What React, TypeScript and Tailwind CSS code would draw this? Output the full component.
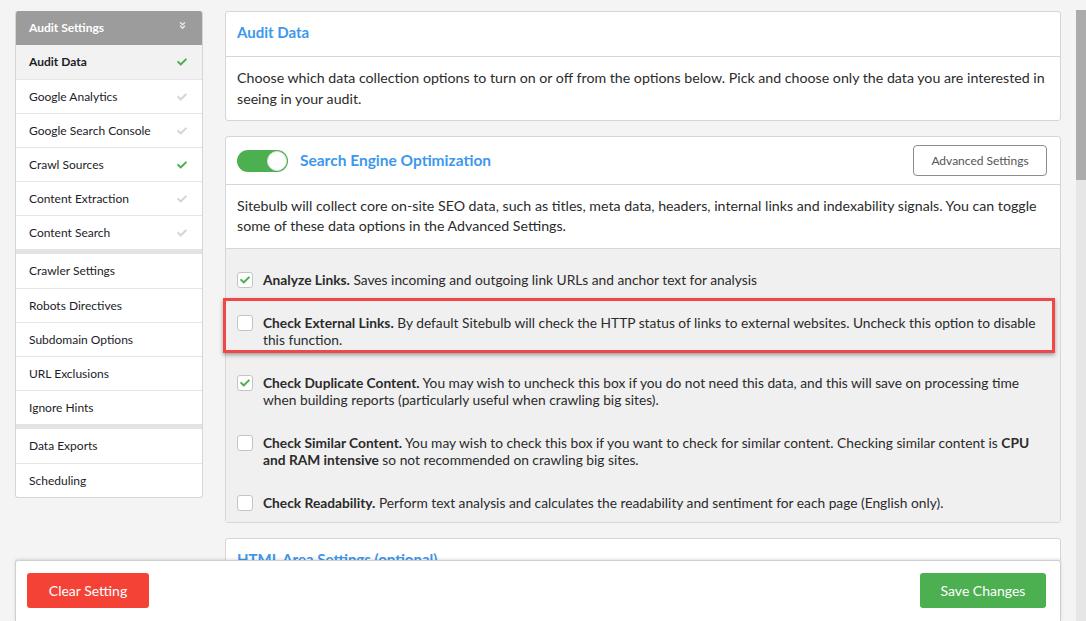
import { FaCheck, FaAngleDoubleDown } from 'react-icons/fa';

const groups = [
  [
    { label: 'Audit Data', check: 'green', active: true },
    { label: 'Google Analytics', check: 'gray' },
    { label: 'Google Search Console', check: 'gray' },
    { label: 'Crawl Sources', check: 'green' },
    { label: 'Content Extraction', check: 'gray' },
    { label: 'Content Search', check: 'gray' },
  ],
  [
    { label: 'Crawler Settings' },
    { label: 'Robots Directives' },
    { label: 'Subdomain Options' },
    { label: 'URL Exclusions' },
    { label: 'Ignore Hints' },
  ],
  [{ label: 'Data Exports' }, { label: 'Scheduling' }],
];

type Item = { label: string; check?: string; active?: boolean };

function Sidebar() {
  return (
    <div className="w-[188px] flex-shrink-0 self-start bg-white border border-t-0 border-[#d6d6d6] rounded-[3px] overflow-hidden">
      <div className="h-[34px] bg-[#9c9c9c] flex items-center justify-between pl-[13px] pr-[15px]">
        <span className="text-white font-bold text-[12px]">Audit Settings</span>
        <FaAngleDoubleDown className="text-[#e8e8e8] w-[9px] h-[9px] -mt-[6px]" />
      </div>
      {groups.map((g, gi) => (
        <div key={gi} className={gi > 0 ? 'border-t-[5px] border-[#e3e3e3]' : ''}>
          {(g as Item[]).map((it, i) => (
            <div
              key={it.label}
              className={`h-[34px] flex items-center justify-between pl-[13px] pr-[15px] text-[12px] text-[#1c1c2a] ${
                i > 0 ? 'border-t border-[#e6e6e6]' : ''
              } ${it.active ? 'bg-[#f2f2f2] font-bold' : ''}`}
            >
              <span>{it.label}</span>
              {it.check && (
                <FaCheck
                  className={`w-[10px] h-[10px] ${it.check === 'green' ? 'text-[#4caf50]' : 'text-[#d4d4d4]'}`}
                />
              )}
            </div>
          ))}
        </div>
      ))}
    </div>
  );
}

function Checkbox({ checked }: { checked?: boolean }) {
  return (
    <div className="w-[16px] h-[16px] mt-px flex-shrink-0 bg-white border border-[#c4c4c4] rounded-[3px] flex items-center justify-center">
      {checked && <FaCheck className="w-[10px] h-[10px] text-[#4caf50]" />}
    </div>
  );
}

function Option({
  checked,
  label,
  children,
  highlight,
}: {
  checked?: boolean;
  label: string;
  children: React.ReactNode;
  highlight?: boolean;
}) {
  return (
    <div className="relative flex items-start gap-[10px]">
      {highlight && (
        <div className="absolute -left-[14px] -right-[6px] -top-[16px] -bottom-[5px] border-[3px] border-[#f04848] shadow-[0_2px_4px_rgba(0,0,0,0.35)]" />
      )}
      <Checkbox checked={checked} />
      <p className="leading-[17px] text-[13.75px]">
        <span className="font-bold">{label}</span> {children}
      </p>
    </div>
  );
}

export default function App() {
  return (
    <div className="flex h-[621px] w-[1086px] bg-[#f4f4f4] overflow-hidden font-['Lato',sans-serif] text-[14.2px] text-[#2b2b2b]">
      <div className="flex-1 flex flex-col px-[15px] min-w-0">
        <div className="flex-1 min-h-0 overflow-hidden flex gap-[22px] pt-[11px]">
          <Sidebar />
          <div className="flex-1 flex flex-col gap-[15px] min-w-0">
            <div className="bg-white border border-[#d6d6d6] rounded-[3px]">
              <div className="h-[45px] flex items-start pt-[9px] px-[11px] border-b border-[#d6d6d6]">
                <h2 className="text-[15px] font-bold text-[#3d98ec]">Audit Data</h2>
              </div>
              <p className="px-[11px] pt-[10px] pb-[11px] leading-[21px]">
                Choose which data collection options to turn on or off from the options below. Pick and choose only
                the data you are interested in seeing in your audit.
              </p>
            </div>

            <div className="bg-white border border-[#d6d6d6] rounded-[3px] flex-shrink-0">
              <div className="h-[48px] flex items-center px-[11px] border-b border-[#d6d6d6]">
                <div className="w-[51px] h-[22px] rounded-full bg-[#4caf50] flex items-center justify-end pr-px">
                  <div className="w-[20px] h-[20px] rounded-full bg-white border border-[#e0e0e0]" />
                </div>
                <h2 className="ml-[12px] text-[15.5px] font-bold text-[#3d98ec]">Search Engine Optimization</h2>
                <button className="ml-auto mr-[2px] w-[134px] h-[31px] border border-[#8c8c8c] rounded-[4px] text-[12px] text-[#555]">
                  Advanced Settings
                </button>
              </div>
              <p className="px-[11px] pt-[11px] pb-[12px] leading-[20px] border-b border-[#d6d6d6]">
                Sitebulb will collect core on-site SEO data, such as titles, meta data, headers, internal links and
                indexability signals. You can toggle some of these data options in the Advanced Settings.
              </p>
              <div className="bg-[#f0f0f0] px-[11px] pt-[22px] pb-[11px] flex flex-col gap-[26px]">
                <Option checked label="Analyze Links.">
                  Saves incoming and outgoing link URLs and anchor text for analysis
                </Option>
                <Option highlight label="Check External Links.">
                  By default Sitebulb will check the HTTP status of links to external websites. Uncheck this option to
                  disable this function.
                </Option>
                <Option checked label="Check Duplicate Content.">
                  You may wish to uncheck this box if you do not need this data, and this will save on processing time
                  when building reports (particularly useful when crawling big sites).
                </Option>
                <Option label="Check Similar Content.">
                  You may wish to check this box if you want to check for similar content. Checking similar content is{' '}
                  <span className="font-bold">CPU and RAM intensive</span> so not recommended on crawling big sites.
                </Option>
                <Option label="Check Readability.">
                  Perform text analysis and calculates the readability and sentiment for each page (English only).
                </Option>
              </div>
            </div>

            <div className="bg-white border border-[#d6d6d6] rounded-[3px] flex-shrink-0">
              <div className="h-[45px] flex items-start pt-[9px] px-[11px]">
                <h2 className="text-[15px] font-bold text-[#3d98ec] underline">HTML Area Settings (optional)</h2>
              </div>
            </div>
          </div>
        </div>

        <div className="h-[61px] flex-shrink-0 bg-white border border-b-0 border-[#d0d0d0] rounded-t-[3px] shadow-[0_-1px_3px_rgba(0,0,0,0.12)] flex items-start justify-between pt-[12px] pl-[11px] pr-[14px]">
          <button className="w-[122px] h-[35px] rounded-[3px] bg-[#f44336] text-white text-[14px]">Clear Setting</button>
          <button className="w-[126px] h-[35px] rounded-[3px] bg-[#4caf50] text-white text-[14px]">Save Changes</button>
        </div>
      </div>

      <div className="w-[10px] flex-shrink-0 pt-[10px] bg-[#f4f4f4] flex flex-col">
        <div className="h-[170px] bg-[#acacac]" />
        <div className="flex-1 bg-[#e6e6e6]" />
      </div>
    </div>
  );
}
